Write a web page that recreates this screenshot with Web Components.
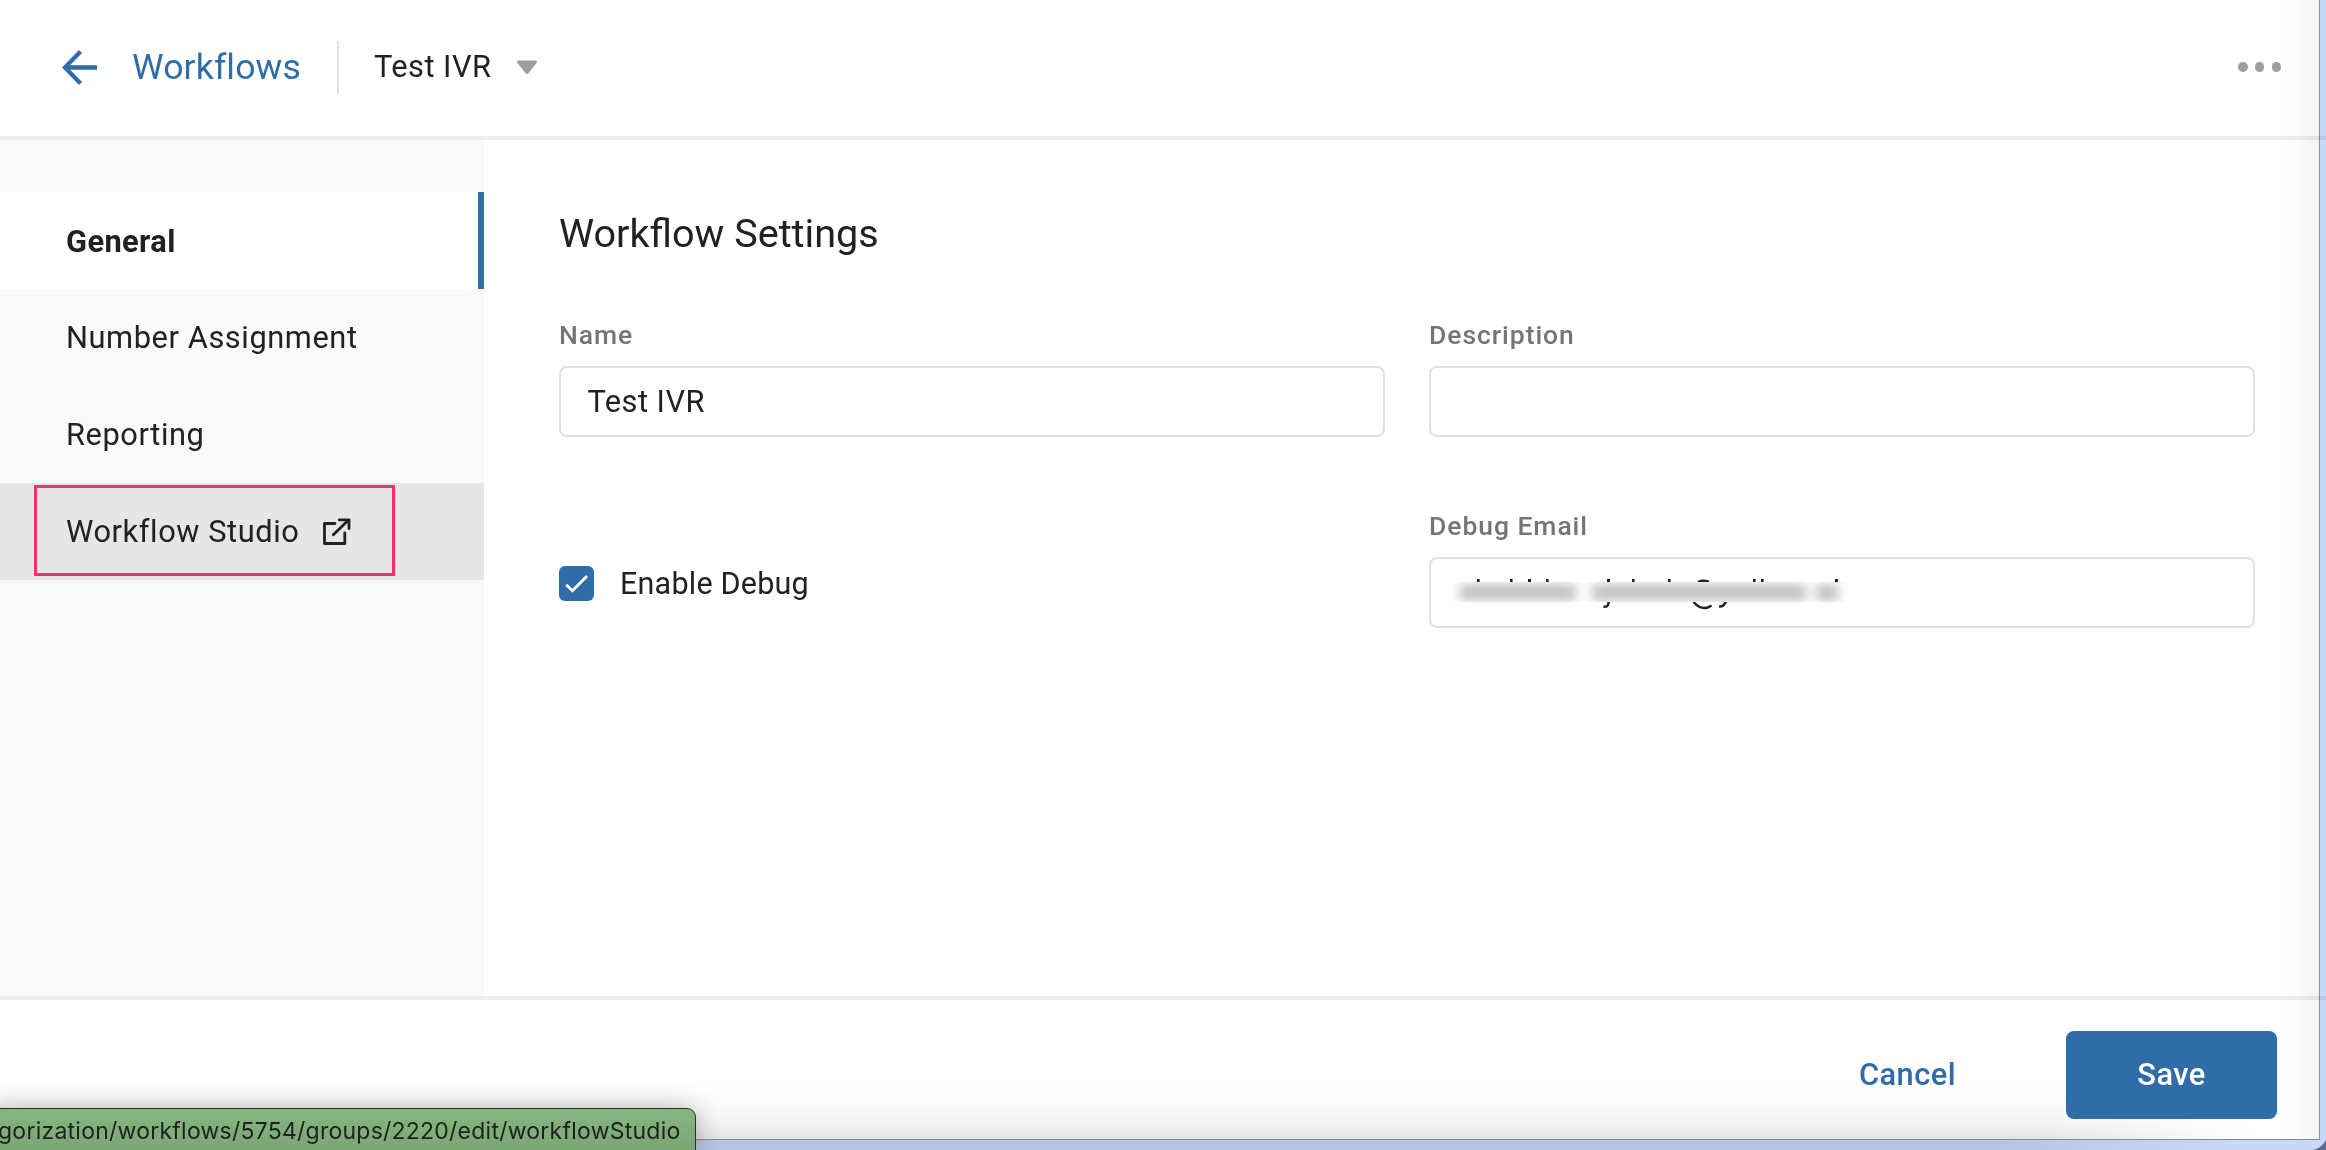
<!DOCTYPE html>
<html lang="en">
<head>
<meta charset="utf-8">
<title>Workflow Settings</title>
<style>
  html, body { margin: 0; height: 100%; }
  body {
    overflow: hidden; background: #fff; color: #212121;
    font-family: Roboto, "Liberation Sans", sans-serif; font-size: 30.8px;
    --blue: #2f6da8; --line: #eeeeee;
  }
</style>
</head>
<body>
<workflow-app></workflow-app>

<script>
const define = (name, html) => {
  const template = document.createElement('template');
  template.innerHTML = html;
  customElements.define(name, class extends HTMLElement {
    constructor() {
      super();
      this.attachShadow({ mode: 'open' }).append(template.content.cloneNode(true));
    }
  });
};

define('top-bar', `
  <style>
    :host { display: flex; align-items: center; box-sizing: border-box; height: 140px;
      padding: 0 45px 2px 61px; border-bottom: 4px solid var(--line); }
    .back { width: 37px; height: 38px; margin-right: 34px; }
    .crumb { width: 169px; color: var(--blue); font-size: 35.6px; letter-spacing: .12px; }
    .rule { width: 2px; height: 53px; background: #e0e0e0; margin: 0 35px 0 36px; }
    .title { width: 117.500px; padding-bottom: 2px; letter-spacing: .45px; white-space: nowrap; }
    .caret { width: 22px; height: 15px; margin-left: 24px; }
    .more { display: flex; gap: 7.2px; margin-left: auto; }
    .more i { width: 9.4px; height: 9.4px; border-radius: 50%; background: #9e9e9e; }
    svg { display: block; flex: none; }
  </style>
  <svg class="back" viewBox="0 0 37 38" fill="none" stroke="#2f6da8" stroke-width="4.3"><path d="M36 19.500H4M19.500 3.500L4 19.500l15.500 16"/></svg>
  <span class="crumb">Workflows</span>
  <span class="rule"></span>
  <span class="title">Test IVR</span>
  <svg class="caret" viewBox="0 0 22 15"><path d="M2.500 2h17L11 12.500z" fill="#9e9e9e" stroke="#9e9e9e" stroke-width="3" stroke-linejoin="round"/></svg>
  <span class="more"><i></i><i></i><i></i></span>
`);

define('nav-item', `
  <style>
    :host { display: flex; align-items: center; position: relative; box-sizing: border-box;
      height: 97px; padding-left: 66px; letter-spacing: .58px; }
    :host([active]) { background: #fff; font-weight: 700; letter-spacing: .4px; padding-top: 1px; border-right: 6px solid var(--blue); }
    :host([hovered]) { background: #e6e6e6; }
  </style>
  <slot></slot><slot name="icon"></slot><slot name="mark"></slot>
`);

define('side-nav', `
  <style>
    :host { display: block; box-sizing: border-box; width: 484px; flex: none; padding-top: 52px; background: #f9f9f9; }
    svg { width: 30px; height: 30px; margin-left: 22px; }
    .mark { position: absolute; left: 34px; top: 2px; width: 361px; height: 91px;
      box-sizing: border-box; border: 3px solid #fb2e65; }
  </style>
  <nav-item active>General</nav-item>
  <nav-item>Number Assignment</nav-item>
  <nav-item>Reporting</nav-item>
  <nav-item hovered>Workflow Studio
    <svg slot="icon" viewBox="0 0 30 30" fill="none" stroke="#212121" stroke-width="2.8" stroke-linecap="round" stroke-linejoin="round"><path d="M14 6.500H3.500V26.500H23.800V15.800M12.300 17.800L27.500 3M18.300 2.800H28V11.500"/></svg>
    <span slot="mark" class="mark"></span>
  </nav-item>
`);

define('form-field', `
  <style>
    :host { display: block; }
    .label { display: block; height: 30px; line-height: 30px; margin-bottom: 16px;
      color: #757575; font-size: 26.500px; font-weight: 500; letter-spacing: .95px; }
    .box { display: flex; align-items: center; box-sizing: border-box; height: 71px; padding: 0 0 1px 26.500px;
      border: 2px solid #e0e0e0; border-radius: 8px; letter-spacing: .45px; background: #fff; }
  </style>
  <span class="label"><slot name="label"></slot></span>
  <div class="box"><slot></slot></div>
`);

define('check-box', `
  <style>
    :host { display: flex; align-items: center; gap: 26px; font-size: 30.500px; letter-spacing: .22px; }
    .tick { display: block; width: 35px; height: 35px; border-radius: 6px; background: var(--blue); }
  </style>
  <svg class="tick" viewBox="0 0 35 35" fill="none" stroke="#fff" stroke-width="2.8"><path d="M7.300 18.800L13.400 24.800L28 10"/></svg>
  <slot></slot>
`);

const ticks = [[25,2.6],[58,2.6],[76,3],[94,2.6],[155,3],[180,2.6],[216,2.6],[301,2.6],[309,2.6],[383,3]];
define('redacted-value', `
  <style>
    :host { display: block; }
    svg { display: block; width: 410px; height: 40px; margin-left: -7.500px; }
  </style>
  <svg viewBox="50 573 410 40" aria-hidden="true">
    <defs>
      <filter id="b" x="-10%" y="-100%" width="120%" height="300%"><feGaussianBlur stdDeviation="5.500 5"/></filter>
      <clipPath id="c"><rect x="52" y="583" width="400" height="20"/></clipPath>
    </defs>
    <g fill="#212121">${ticks.map(([x, w]) => `<rect x="${x + 52}" y="580" width="${w}" height="3"/>`).join('')}</g>
    <g fill="none" stroke="#212121" stroke-width="2.500">
      <path d="M208.500 602v2q0 4-5 3.800M293.500 603q9 10 18 3.500M326 602q-2 6-7 5.500M298 583q5-2.500 11 0"/>
    </g>
    <rect x="52" y="583" width="400" height="20" fill="#fff"/>
    <g clip-path="url(#c)"><g filter="url(#b)" fill="#000" fill-opacity=".23">
      <rect x="60" y="585" width="116" height="17"/><rect x="192" y="585" width="214" height="17"/><rect x="416" y="585" width="22" height="17"/>
    </g></g>
  </svg>
`);

define('settings-form', `
  <style>
    :host { display: block; flex: 1; padding: 69px 71px 0 75px; }
    h1 { margin: 0 0 61px; height: 50px; line-height: 50px; font-size: 39.600px; font-weight: 400; }
    .grid { display: grid; grid-template-columns: 826px 826px; column-gap: 44px; row-gap: 74px; }
    check-box { height: 35px; margin-top: 55px; }
  </style>
  <h1>Workflow Settings</h1>
  <div class="grid">
    <form-field><span slot="label">Name</span>Test IVR</form-field>
    <form-field><span slot="label">Description</span></form-field>
    <check-box>Enable Debug</check-box>
    <form-field><span slot="label">Debug Email</span><redacted-value></redacted-value></form-field>
  </div>
`);

define('action-button', `
  <style>
    :host { display: flex; align-items: center; justify-content: center; box-sizing: border-box; width: 211px; height: 88px;
      padding-bottom: 2px; border-radius: 8px; color: var(--blue); font-weight: 500; letter-spacing: .45px; }
    :host([primary]) { background: var(--blue); color: #fff; }
  </style>
  <slot></slot>
`);

define('action-bar', `
  <style>
    :host { display: flex; justify-content: flex-end; gap: 53px; box-sizing: border-box; height: 154px;
      padding: 31px 49px 0 0; border-top: 4px solid var(--line);
      background: linear-gradient(90deg, #fff0 88%, #fff 97%), linear-gradient(#fff 82px, #fafafa 104px, #f3f3f3 124px, #e4e4e4 139px); }
  </style>
  <action-button>Cancel</action-button>
  <action-button primary>Save</action-button>
`);

define('window-edge', `
  <style>
    :host { position: absolute; inset: 0; pointer-events: none; }
    .shade { position: absolute; top: 0; right: 7px; bottom: 11px; width: 40px; mix-blend-mode: multiply;
      background: linear-gradient(90deg, #fff, #fbfbfb 50%, #f3f3f3); }
    .side { position: absolute; top: 0; right: 0; bottom: 0; width: 6px; mix-blend-mode: multiply;
      background: #c8d8f8; border-left: 1px solid #8d929d; }
    .foot { position: absolute; left: 0; right: 6px; bottom: 0; height: 10px; border-top: 1px solid #858990;
      background: linear-gradient(90deg, #b7c5e5 86%, #c8d8f8 96%); }
    svg { position: absolute; right: 0; bottom: 0; width: 14px; height: 10px; }
  </style>
  <div class="shade"></div><div class="side"></div><div class="foot"></div>
  <svg viewBox="0 0 14 10"><path d="M14 0Q9 9 0 10H14z" fill="#5a6b8c"/></svg>
`);

define('status-bubble', `
  <style>
    :host { position: absolute; left: -10px; bottom: -2px; display: flex; align-items: center; justify-content: flex-end;
      box-sizing: border-box; width: 706px; height: 44px; padding: 1px 14.500px 0 0; overflow: hidden;
      border: 1.500px solid #2c302c; border-radius: 0 9px 0 0; background: linear-gradient(#86b680, #7aa574);
      color: #1d211d; font: 23px/30px Inter, "Liberation Sans", sans-serif; letter-spacing: .24px; white-space: nowrap;
      box-shadow: 0 2px 26px rgba(0,0,0,.32); }
  </style>
  <slot></slot>
`);

define('workflow-app', `
  <style>
    :host { display: flex; flex-direction: column; position: relative; height: 1150px; overflow: hidden; }
    main { display: flex; flex: 1; }
  </style>
  <top-bar></top-bar>
  <main><side-nav></side-nav><settings-form></settings-form></main>
  <action-bar></action-bar>
  <window-edge></window-edge>
  <status-bubble>gorization/workflows/5754/groups/2220/edit/workflowStudio</status-bubble>
`);
</script>
</body>
</html>
